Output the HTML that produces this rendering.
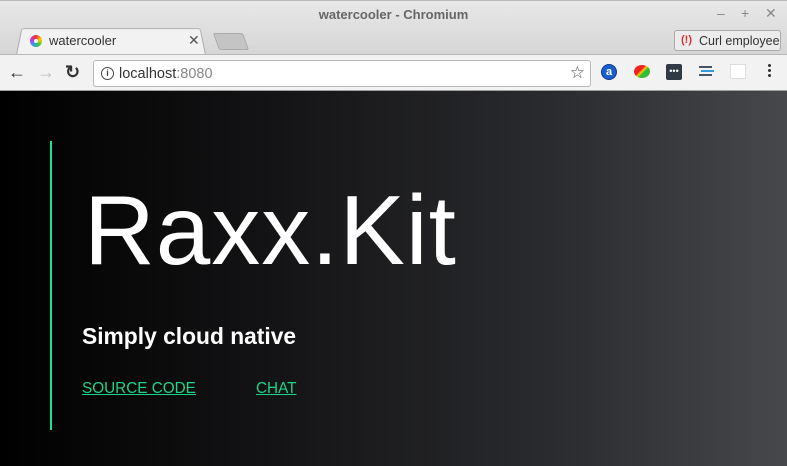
<!DOCTYPE html>
<html><head><meta charset="utf-8"><style>
*{margin:0;padding:0;box-sizing:border-box}
body{width:787px;height:466px;overflow:hidden;font-family:"Liberation Sans",sans-serif;background:#dcdcdc;position:relative}
.titlebar{position:absolute;left:0;top:0;width:787px;height:54px;background:linear-gradient(#e8e8e8,#d6d6d6);border-top:1px solid #bbb}
.title{position:absolute;top:6px;left:0;width:787px;text-align:center;font-weight:bold;font-size:13px;color:#666}
.wc{position:absolute;top:4px;font-size:14px;color:#888}
.tab{position:absolute;left:16px;top:25px;width:190px;height:29px;background:#f2f2f2;border:1px solid #aaa;border-bottom:none;transform:perspective(100px) rotateX(12deg);transform-origin:bottom;border-radius:3px 3px 0 0}
.tabtxt{position:absolute;left:49px;top:32px;font-size:13px;color:#333}
.fav{position:absolute;left:30px;top:34px;width:12px;height:12px;border-radius:50%;background:conic-gradient(#e33,#fc0,#3c3,#39f,#c3c,#e33)}
.fav:after{content:"";position:absolute;left:4px;top:4px;width:4px;height:4px;border-radius:50%;background:#fff}
.tx{position:absolute;left:188px;top:31px;font-size:14px;color:#555}
.newtab{position:absolute;left:216px;top:32px;width:30px;height:17px;background:#c4c4c4;border:1px solid #aaa;transform:skewX(20deg);border-radius:2px}
.curl{position:absolute;left:674px;top:29px;width:107px;height:21px;border:1px solid #aaa;border-radius:3px;background:#ececec;font-size:12.5px;color:#333;padding:3px 0 0 24px}
.curl b{position:absolute;left:6px;top:3px;color:#d33;font-size:11px}
.toolbar{position:absolute;left:0;top:54px;width:787px;height:37px;background:#f2f2f2;border-top:1px solid #b8b8b8;border-bottom:1px solid #a0a0a0}
.omni{position:absolute;left:93px;top:5px;width:498px;height:27px;background:#fff;border:1px solid #bbb;border-radius:3px}
.url{position:absolute;left:25px;top:5px;font-size:14.5px;color:#333}
.url span{color:#888}
.info{position:absolute;left:7px;top:6px;width:13px;height:13px;border:1.5px solid #444;border-radius:50%;font-size:9px;text-align:center;line-height:10px;color:#444;font-weight:bold}
.nav{position:absolute;top:7px;font-size:18px}
.page{position:absolute;left:0;top:91px;width:787px;height:375px;background:linear-gradient(90deg,#000 0%,#141416 35%,#2a2b2e 70%,#46484c 100%)}
.bar{position:absolute;left:50px;top:50px;width:2px;height:289px;background:#1de28c}
h1{position:absolute;left:84px;top:90px;font-size:98px;line-height:98px;font-weight:normal;color:#fff;letter-spacing:1px;white-space:nowrap}
h2{position:absolute;left:82px;top:234px;font-size:22.8px;line-height:23px;color:#fff;white-space:nowrap}
a{position:absolute;top:290px;font-size:15.3px;line-height:16px;color:#1ed488;text-decoration:underline;white-space:nowrap}
</style></head><body>
<div class="titlebar">
<div class="title">watercooler - Chromium</div>
<div class="wc" style="left:717px">–</div><div class="wc" style="left:741px">+</div><div class="wc" style="left:765px">✕</div>
<div class="tab"></div>
<div class="fav"></div>
<div class="tabtxt">watercooler</div>
<div class="tx">✕</div>
<div class="newtab"></div>
<div class="curl"><b>(!)</b>Curl employee</div>
</div>
<div class="toolbar">
<div class="nav" style="left:8px;color:#333">←</div>
<div class="nav" style="left:37px;color:#bbb">→</div>
<div class="nav" style="left:65px;color:#333;font-weight:bold">↻</div>
<div class="omni"><div class="info">i</div><div class="url">localhost<span>:8080</span></div><div style="position:absolute;right:5px;top:2px;font-size:17px;color:#555">☆</div></div>
<div style="position:absolute;left:601px;top:9px;width:16px;height:16px;border-radius:50%;background:#1a5fd0;border:1px solid #0a3a90;color:#fff;font-size:11px;text-align:center;line-height:14px;font-weight:bold">a</div>
<div style="position:absolute;left:634px;top:10px;width:16px;height:13px;border-radius:50%;background:linear-gradient(135deg,#e22 40%,#fc0 50%,#3b3 60%)"></div>
<div style="position:absolute;left:666px;top:9px;width:16px;height:16px;background:#2f3a44;border-radius:2px;color:#fff;font-size:9px;text-align:center;line-height:14px">•••</div>
<div style="position:absolute;left:699px;top:11px;width:13px;height:2px;background:#456;box-shadow:2px 4px 0 #39d,0 8px 0 #456"></div>
<div style="position:absolute;left:730px;top:9px;width:16px;height:15px;background:#fff;border:1px solid #ddd"></div>
<div style="position:absolute;left:768px;top:9px;width:3px;height:3px;background:#333;border-radius:50%;box-shadow:0 5px 0 #333,0 10px 0 #333"></div>
</div>
<div class="page">
<div class="bar"></div>
<h1>Raxx.Kit</h1>
<h2>Simply cloud native</h2>
<a style="left:82px">SOURCE CODE</a>
<a style="left:256px">CHAT</a>
</div>
</body></html>
